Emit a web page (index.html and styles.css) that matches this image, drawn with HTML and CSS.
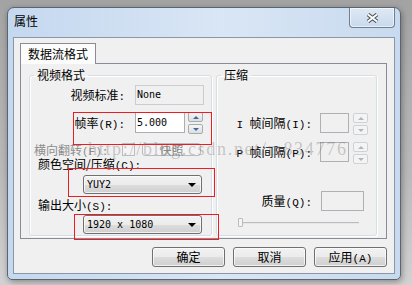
FILE: index.html
```html
<!DOCTYPE html>
<html>
<head>
<meta charset='utf-8'/>
<meta name="viewport" content="width=device-width,initial-scale=1" />
<title>属性</title>
<link rel="stylesheet" href="styles.css">
</head>
<body>

    <div id="window">
        <div id="titlebar">
            <span id="title">属性</span>
            <div id="close">
                <svg width="13" height="10" viewBox="0 0 13 10">
                    <path d="M2 1.5 L11 8.5 M11 1.5 L2 8.5" stroke="#4a4f57" stroke-width="4"/>
                    <path d="M2 1.5 L11 8.5 M11 1.5 L2 8.5" stroke="#fff" stroke-width="2"/>
                </svg>
            </div>
        </div>
        <div id="client">
            <div class="tabs">
                <div class="tab">数据流格式</div>
            </div>
            <div class="panel">
                <fieldset class="group" id="video">
                    <legend>视频格式</legend>
                    <div class="row r-std">
                        <span class="lbl-r">视频标准<span class="en">:</span></span>
                        <div class="edit readonly w-std">None</div>
                    </div>
                    <div class="row r-fps">
                        <span class="lbl-r">帧率<span class="en">(R):</span></span>
                        <div class="edit w-fps">5.000</div>
                        <div class="spin">
                            <div class="spin-btn"><span class="tri up"></span></div>
                            <div class="spin-btn"><span class="tri down"></span></div>
                        </div>
                    </div>
                    <div class="row r-flip">
                        <span class="lbl-flip off">横向翻转<span class="en">(F):</span></span>
                        <span class="check"></span>
                        <div class="btn-snap">快照</div>
                    </div>
                    <div class="lbl-line l-color">颜色空间/压缩<span class="en">(C):</span></div>
                    <div class="combo c-color">
                        <span class="val">YUY2</span>
                        <span class="arrow"></span>
                    </div>
                    <div class="lbl-line l-size">输出大小<span class="en">(S):</span></div>
                    <div class="combo c-size">
                        <span class="val">1920 x 1080</span>
                        <span class="arrow"></span>
                    </div>
                </fieldset>
                <fieldset class="group" id="compress">
                    <legend>压缩</legend>
                    <div class="row r-i">
                        <span class="lbl-r"><span class="en">I </span>帧间隔<span class="en">(I):</span></span>
                        <div class="edit dis w-int"></div>
                        <div class="spin dis">
                            <div class="spin-btn"><span class="tri up"></span></div>
                            <div class="spin-btn"><span class="tri down"></span></div>
                        </div>
                    </div>
                    <div class="row r-p">
                        <span class="lbl-r"><span class="en">P </span>帧间隔<span class="en">(P):</span></span>
                        <div class="edit dis w-int"></div>
                        <div class="spin dis">
                            <div class="spin-btn"><span class="tri up"></span></div>
                            <div class="spin-btn"><span class="tri down"></span></div>
                        </div>
                    </div>
                    <div class="row r-q">
                        <span class="lbl-r">质量<span class="en">(Q):</span></span>
                        <div class="edit dis w-q"></div>
                    </div>
                    <div class="slider">
                        <span class="thumb"></span>
                    </div>
                </fieldset>
            </div>
            <div class="buttons">
                <div class="button">确定</div>
                <div class="button">取消</div>
                <div class="button">应用<span class="en">(A)</span></div>
            </div>
        </div>
    </div>

    <div class="mark" id="mark1"></div>
    <div class="mark" id="mark2"></div>
    <div class="mark" id="mark3"></div>
    <div id="watermark">http://blog.csdn.net/m834776</div>

</body>
</html>
```

FILE: styles.css
```css
body {
    margin: 0;
    padding: 0;
    width: 412px;
    height: 285px;
    overflow: hidden;
    position: relative;
    background: linear-gradient(#a3a3a3, #b9b9b9 60%, #d2d2d2);
    font-family: "Noto Sans CJK SC", sans-serif;
    font-size: 12px;
    color: #000;
}
.en {
    font-family: "Liberation Mono", monospace;
    font-size: 11px;
    white-space: pre;
}
#window {
    box-sizing: border-box;
    width: 394px;
    height: 273px;
    margin: 7px 0 0 7px;
    padding: 0 5px 5px 5px;
    border: 1px solid #5a6570;
    border-radius: 7px 7px 5px 5px;
    background: linear-gradient(to right, #c4d8ef, #d9e6f5 55%, #c8daef);
    box-shadow: 1px 2px 6px rgba(0, 0, 0, .35);
}
#titlebar {
    display: flex;
    align-items: flex-start;
    height: 29px;
}
#title {
    margin: 6px 0 0 1px;
    line-height: 14px;
}
#close {
    box-sizing: border-box;
    margin-left: auto;
    width: 46px;
    height: 20px;
    border: 1px solid #6f7f93;
    border-top: none;
    border-radius: 0 0 4px 4px;
    background: linear-gradient(#dfe9f5, #c9d9ec);
    box-shadow: inset 0 0 0 1px rgba(255, 255, 255, .6);
    display: flex;
    align-items: center;
    justify-content: center;
}
#client {
    box-sizing: border-box;
    height: 237px;
    border: 1px solid #8b97a6;
    background: #f0f0f0;
    padding: 5px 7px 0 6px;
}
.tabs {
    display: flex;
    height: 20px;
}
.tab {
    box-sizing: border-box;
    width: 76px;
    height: 21px;
    border: 1px solid #898c95;
    border-bottom: none;
    background: #fcfcfc;
    text-align: center;
    line-height: 19px;
    position: relative;
    z-index: 1;
}
.panel {
    box-sizing: border-box;
    width: 367px;
    height: 176px;
    border: 1px solid #898c95;
    padding: 4px 8px 0 8px;
    display: flex;
    gap: 4px;
}
.group {
    box-sizing: border-box;
    margin: 0;
    padding: 0;
    min-width: 0;
    height: 168px;
    border: 1px solid #d5dfe5;
    border-radius: 3px;
    box-shadow: inset 1px 1px 0 #fff, 1px 1px 0 #fff;
}
.group legend {
    margin-left: 4px;
    padding: 0 3px;
    line-height: 14px;
}
#video {
    width: 183px;
}
#compress {
    width: 161px;
}
.row {
    display: flex;
    align-items: flex-start;
}
.lbl-r {
    width: 95px;
    text-align: right;
    white-space: nowrap;
    line-height: 20px;
    height: 20px;
}
.r-std {
    margin-top: 3px;
    height: 20px;
}
.r-std .lbl-r {
    margin-right: 10px;
}
.r-fps {
    margin-top: 7px;
    height: 21px;
}
.r-fps .lbl-r {
    line-height: 21px;
    height: 21px;
    margin-right: 10px;
}
.edit {
    box-sizing: border-box;
    height: 20px;
    border: 1px solid #abadb3;
    border-top-color: #9a9da4;
    background: #fff;
    font-family: "DejaVu Sans Mono", monospace;
    font-size: 10px;
    line-height: 18px;
    padding-left: 1px;
}
.edit.readonly {
    background: #f0f0f0;
    border-color: #c9ccd1;
}
.edit.dis {
    background: #f0f0f0;
    border-color: #adb0b5;
}
.w-std {
    width: 69px;
}
.w-fps {
    width: 50px;
    height: 21px;
    line-height: 19px;
}
.w-int {
    width: 29px;
}
.w-q {
    width: 43px;
}
.spin {
    display: flex;
    flex-direction: column;
    gap: 2px;
    margin-left: 3px;
}
.spin-btn {
    box-sizing: border-box;
    width: 15px;
    height: 10px;
    border: 1px solid #a7abb0;
    border-radius: 2px;
    background: linear-gradient(#f6f6f6, #dedede);
    display: flex;
    align-items: center;
    justify-content: center;
}
.spin.dis {
    margin-left: 4px;
}
.spin.dis .spin-btn {
    border-color: #cfd2d5;
    background: #f4f4f4;
}
.tri {
    width: 0;
    height: 0;
    border-left: 3px solid transparent;
    border-right: 3px solid transparent;
}
.tri.up {
    border-bottom: 3px solid #3d6aa6;
}
.tri.down {
    border-top: 3px solid #3d6aa6;
}
.spin.dis .tri.up {
    border-bottom-color: #b5b5b5;
}
.spin.dis .tri.down {
    border-top-color: #b5b5b5;
}
.r-flip {
    margin-top: 10px;
    height: 13px;
}
.lbl-flip {
    width: 88px;
    height: 13px;
    margin-left: 4px;
    line-height: 13px;
    white-space: nowrap;
}
.off {
    color: #8d8d8d;
}
.check {
    box-sizing: border-box;
    width: 13px;
    height: 13px;
    border: 1px solid #bcbcbc;
    background: #f4f4f4;
}
.btn-snap {
    box-sizing: border-box;
    width: 59px;
    height: 13px;
    margin-left: 7px;
    border: 1px solid #b8bbbf;
    border-radius: 3px;
    background: #f4f4f4;
    color: #8d8d8d;
    text-align: center;
    line-height: 11px;
}
.lbl-line {
    margin-left: 8px;
    height: 13px;
    line-height: 13px;
    white-space: nowrap;
}
.l-color {
    margin-top: 1px;
}
.l-size {
    margin-top: 4px;
}
.combo {
    box-sizing: border-box;
    width: 119px;
    height: 19px;
    margin-left: 53px;
    border: 1px solid #707070;
    border-radius: 3px;
    background: linear-gradient(#f2f2f2 0%, #ebebeb 50%, #dddddd 51%, #cfcfcf 100%);
    box-shadow: inset 0 0 0 1px rgba(255, 255, 255, .7);
    display: flex;
    align-items: center;
    padding: 0 5px 0 3px;
}
.c-color {
    margin-top: 5px;
}
.c-size {
    margin-top: 4px;
}
.combo .val {
    font-family: "DejaVu Sans Mono", monospace;
    font-size: 10px;
    flex: 1;
}
.combo .arrow {
    width: 0;
    height: 0;
    border-left: 4px solid transparent;
    border-right: 4px solid transparent;
    border-top: 4px solid #000;
}
.r-i {
    margin-top: 31px;
    height: 20px;
}
.r-i .lbl-r, .r-p .lbl-r {
    margin-right: 8px;
}
.r-p {
    margin-top: 9px;
    height: 20px;
}
.r-q {
    margin-top: 29px;
    height: 20px;
}
.r-q .lbl-r {
    margin-right: 9px;
}
.slider {
    width: 121px;
    height: 10px;
    margin: 7px 0 0 21px;
    background: linear-gradient(transparent 4px, #b9bcc0 4px, #b9bcc0 5px, #e6e6e6 5px, #e6e6e6 6px, transparent 6px);
    display: flex;
}
.thumb {
    box-sizing: border-box;
    width: 5px;
    height: 9px;
    border: 1px solid #b9bcc0;
    border-radius: 1px;
    background: #f4f4f4;
}
.buttons {
    display: flex;
    justify-content: flex-end;
    gap: 8px;
    width: 367px;
    margin-top: 8px;
}
.button {
    box-sizing: border-box;
    width: 73px;
    height: 20px;
    border: 1px solid #707070;
    border-radius: 3px;
    background: linear-gradient(#f2f2f2 0%, #ebebeb 50%, #dddddd 51%, #cfcfcf 100%);
    box-shadow: inset 0 0 0 1px rgba(255, 255, 255, .7);
    text-align: center;
    line-height: 18px;
    overflow: hidden;
}
.mark {
    position: absolute;
    box-sizing: border-box;
    border: 1px solid #ec1c24;
}
#mark1 {
    left: 73px;
    top: 112px;
    width: 139px;
    height: 33px;
}
#mark2 {
    left: 68px;
    top: 168px;
    width: 147px;
    height: 29px;
}
#mark3 {
    left: 74px;
    top: 214px;
    width: 145px;
    height: 26px;
}
#watermark {
    position: absolute;
    left: 88px;
    top: 140px;
    font-family: "Liberation Serif", serif;
    font-size: 18px;
    line-height: 18px;
    letter-spacing: 1.7px;
    color: rgba(110, 110, 110, .35);
    white-space: nowrap;
    pointer-events: none;
}
```
